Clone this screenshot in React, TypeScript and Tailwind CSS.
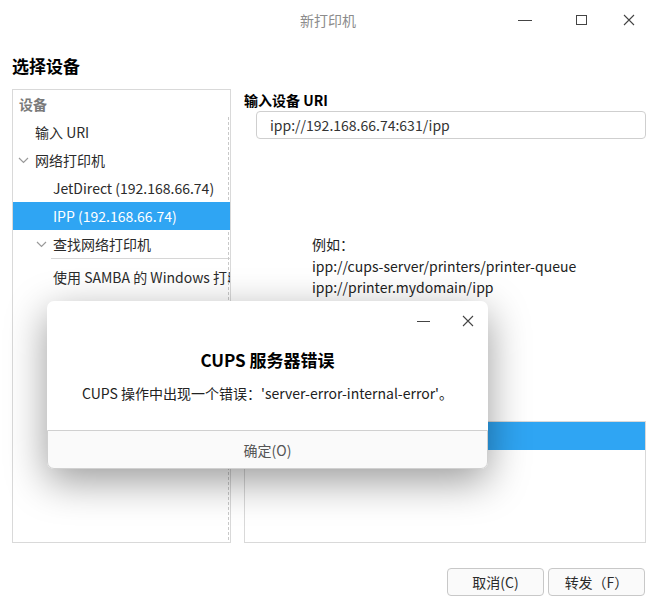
import React from "react";

const font = {
  fontFamily: '"Noto Sans CJK SC", "Noto Sans", sans-serif',
};

function Chevron() {
  return (
    <svg width="11" height="7" viewBox="0 0 11 7" className="shrink-0">
      <polyline points="1,1 5.5,5.5 10,1" fill="none" stroke="#9a9a9a" strokeWidth="1.2" />
    </svg>
  );
}

function TreeRow({
  indent,
  chevron,
  selected,
  children,
}: {
  indent: number;
  chevron?: boolean;
  selected?: boolean;
  children: React.ReactNode;
}) {
  return (
    <div
      className={`h-[28px] flex items-center whitespace-nowrap text-[14px] ${
        selected ? "relative z-10 bg-[#2fa5f3] text-white" : "text-[#2b2b2b]"
      }`}
      style={{ paddingLeft: indent }}
    >
      {chevron && (
        <span className="w-[17px] flex items-center">
          <Chevron />
        </span>
      )}
      <span>{children}</span>
    </div>
  );
}

export default function App() {
  return (
    <div className="relative w-[656px] h-[607px] bg-white overflow-hidden rounded-t-[6px]" style={font}>
      {/* title bar */}
      <div className="relative h-[40px] flex items-center justify-center">
        <span className="text-[14px] text-[#8c8c8c]">新打印机</span>
        <div className="absolute right-0 top-0 h-[40px] flex items-center">
          <div className="w-[62px] flex justify-center">
            <div className="w-[14px] h-px bg-[#444]" />
          </div>
          <div className="w-[50px] flex justify-center">
            <div className="w-[11px] h-[10px] border border-[#444]" />
          </div>
          <div className="w-[50px] flex justify-center pr-[4px]">
            <svg width="12" height="12" viewBox="0 0 12 12">
              <path d="M1 1 L11 11 M11 1 L1 11" stroke="#444" strokeWidth="1.1" />
            </svg>
          </div>
        </div>
      </div>

      {/* heading */}
      <div className="h-[49px] pt-[3px] px-[12px] flex items-center">
        <span className="text-[17px] font-bold text-black">选择设备</span>
      </div>

      {/* content */}
      <div className="flex gap-[13px] pl-[12px] pr-[10px] h-[454px]">
        {/* tree */}
        <div className="relative w-[219px] shrink-0 border border-[#d9d9d9] overflow-hidden">
          <div className="absolute right-[1px] top-[27px] bottom-[2px] border-r border-dashed border-[#c8c8c8]" />
          <div className="h-[28px] flex items-center pl-[6px] text-[14px] font-bold text-[#7a7a7a]">设备</div>
          <TreeRow indent={22}>输入 URI</TreeRow>
          <TreeRow indent={5} chevron>
            网络打印机
          </TreeRow>
          <TreeRow indent={40}>JetDirect (192.168.66.74)</TreeRow>
          <TreeRow indent={40} selected>
            IPP (192.168.66.74)
          </TreeRow>
          <TreeRow indent={23} chevron>
            查找网络打印机
          </TreeRow>
          <div className="ml-[38px] h-px bg-[#d6d6d6]" />
          <div className="h-[4px]" />
          <TreeRow indent={40}>使用 SAMBA 的 Windows 打印机</TreeRow>
        </div>

        {/* right side */}
        <div className="flex-1 flex flex-col">
          <div className="h-[22px] pt-[1px] flex items-center text-[14px] font-bold text-black">输入设备 URI</div>
          <div className="ml-[12px] h-[28px] border border-[#cfcfcf] rounded-[4px] flex items-center px-[13px] text-[14px] text-[#333]">
            ipp://192.168.66.74:631/ipp
          </div>
          <div className="mt-[95px] ml-[68px] text-[14px] leading-[21.5px] text-[#222]">
            <div>例如：</div>
            <div>ipp://cups-server/printers/printer-queue</div>
            <div>ipp://printer.mydomain/ipp</div>
          </div>
          <div className="mt-auto h-[122px] border border-[#d9d9d9]">
            <div className="h-[28px] bg-[#2fa5f3]" />
          </div>
        </div>
      </div>

      {/* bottom buttons */}
      <div className="flex justify-end gap-[4px] pr-[11px] pt-[25px]">
        <button className="w-[97px] h-[28px] border border-[#c8c8c8] rounded-[4px] bg-[#fafafa] text-[14px] text-[#2b2b2b]">
          取消(C)
        </button>
        <button className="w-[97px] h-[28px] border border-[#c8c8c8] rounded-[4px] bg-[#fafafa] text-[14px] text-[#2b2b2b]">
          转发（F）
        </button>
      </div>

      {/* error dialog */}
      <div className="absolute z-20 left-[47px] top-[301px] w-[441px] h-[168px] bg-white rounded-[7px] shadow-[0_12px_40px_rgba(0,0,0,0.4)] flex flex-col">
        <div className="h-[40px] flex justify-end items-center pr-[14px]">
          <div className="w-[50px] flex justify-center">
            <div className="w-[13px] h-px bg-[#444]" />
          </div>
          <div className="w-[26px] flex justify-end">
            <svg width="12" height="12" viewBox="0 0 12 12">
              <path d="M1 1 L11 11 M11 1 L1 11" stroke="#444" strokeWidth="1.1" />
            </svg>
          </div>
        </div>
        <div className="text-center text-[17px] font-bold text-black leading-[24px] mt-[7px]">CUPS 服务器错误</div>
        <div className="text-center text-[14px] text-[#222] leading-[20px] mt-[11px]">
          CUPS 操作中出现一个错误：'server-error-internal-error'。
        </div>
        <div className="mt-auto h-[39px] pt-[2px] border border-[#d0d0d0] rounded-b-[7px] bg-[#fafafa] flex items-center justify-center text-[14px] text-[#555]">
          确定(O)
        </div>
      </div>
    </div>
  );
}
